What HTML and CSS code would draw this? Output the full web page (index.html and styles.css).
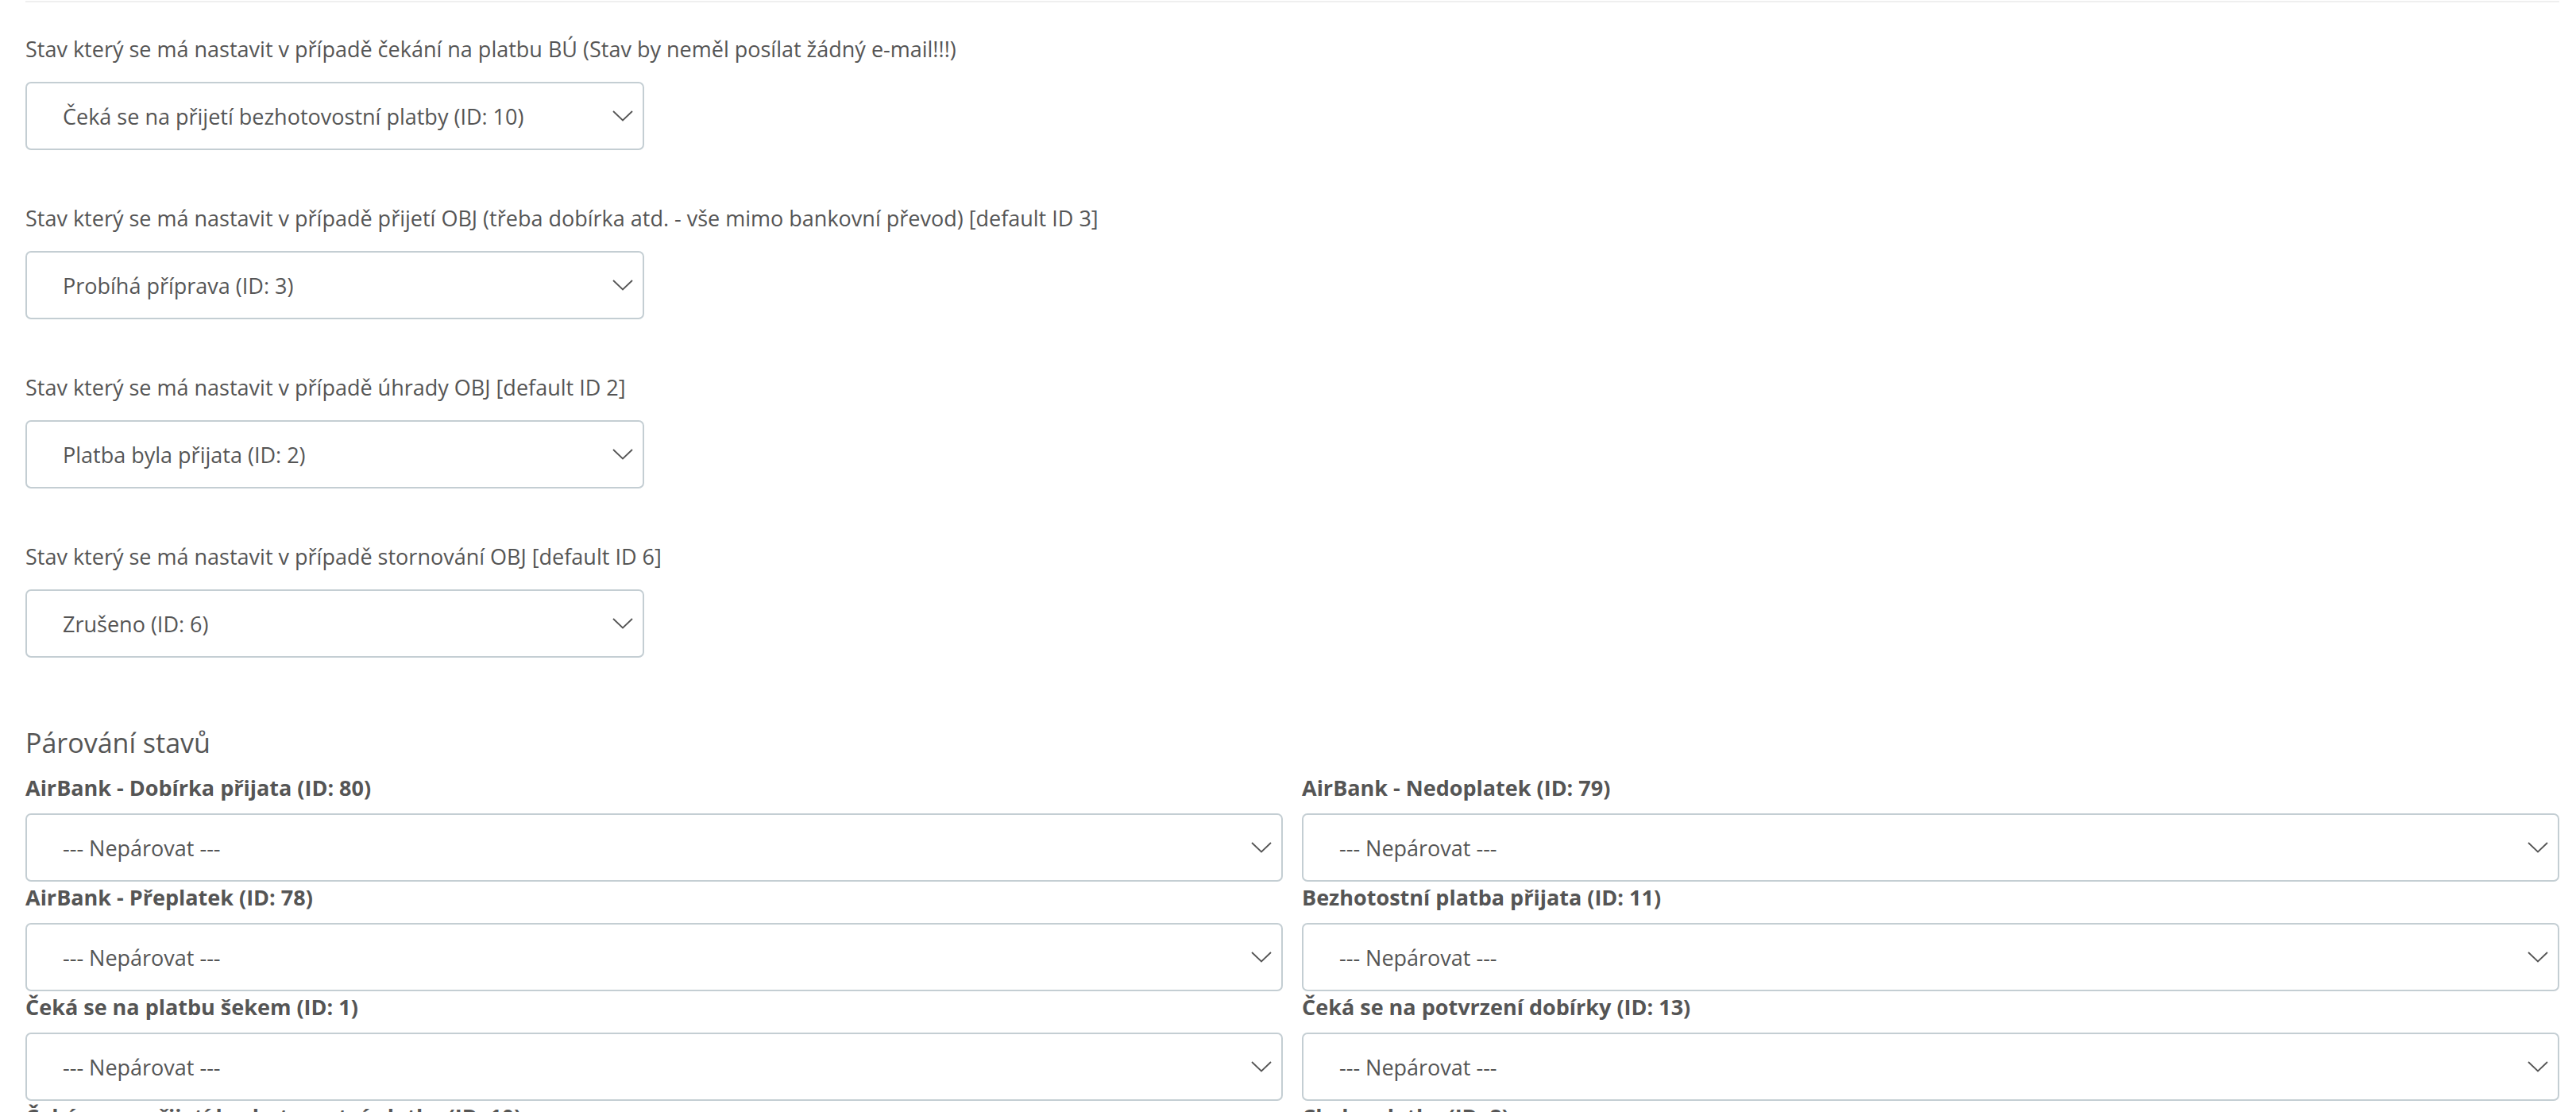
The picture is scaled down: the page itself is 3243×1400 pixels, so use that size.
FILE: index.html
```html
<!DOCTYPE html>
<html lang="cs">
<head>
    <meta charset="UTF-8">
    <meta name="viewport" content="width=device-width, initial-scale=1.0">
    <title>Nastavení stavů</title>
    <link rel="stylesheet" href="styles.css">
</head>
<body>
    <div class="container">
        <div class="top-rule"></div>

        <div class="field">
            <label for="stateWaiting">Stav který se má nastavit v případě čekání na platbu BÚ (Stav by neměl posílat žádný e-mail!!!)</label>
            <div class="select-wrap narrow">
                <select id="stateWaiting">
                    <option value="10" selected>Čeká se na přijetí bezhotovostní platby (ID: 10)</option>
                </select>
                <svg class="chevron" viewBox="0 0 26 14"><polyline points="1,1 13,12.5 25,1"/></svg>
            </div>
        </div>

        <div class="field">
            <label for="stateAccepted">Stav který se má nastavit v případě přijetí OBJ (třeba dobírka atd. - vše mimo bankovní převod) [default ID 3]</label>
            <div class="select-wrap narrow">
                <select id="stateAccepted">
                    <option value="3" selected>Probíhá příprava (ID: 3)</option>
                </select>
                <svg class="chevron" viewBox="0 0 26 14"><polyline points="1,1 13,12.5 25,1"/></svg>
            </div>
        </div>

        <div class="field">
            <label for="statePaid">Stav který se má nastavit v případě úhrady OBJ [default ID 2]</label>
            <div class="select-wrap narrow">
                <select id="statePaid">
                    <option value="2" selected>Platba byla přijata (ID: 2)</option>
                </select>
                <svg class="chevron" viewBox="0 0 26 14"><polyline points="1,1 13,12.5 25,1"/></svg>
            </div>
        </div>

        <div class="field">
            <label for="stateCanceled">Stav který se má nastavit v případě stornování OBJ [default ID 6]</label>
            <div class="select-wrap narrow">
                <select id="stateCanceled">
                    <option value="6" selected>Zrušeno (ID: 6)</option>
                </select>
                <svg class="chevron" viewBox="0 0 26 14"><polyline points="1,1 13,12.5 25,1"/></svg>
            </div>
        </div>

        <h3 class="section-title">Párování stavů</h3>
        <div class="pairing">
            <div class="pair">
                <label for="pair80">AirBank - Dobírka přijata (ID: 80)</label>
                <div class="select-wrap">
                    <select id="pair80"><option value="" selected>--- Nepárovat ---</option></select>
                    <svg class="chevron" viewBox="0 0 26 14"><polyline points="1,1 13,12.5 25,1"/></svg>
                </div>
            </div>
            <div class="pair">
                <label for="pair79">AirBank - Nedoplatek (ID: 79)</label>
                <div class="select-wrap">
                    <select id="pair79"><option value="" selected>--- Nepárovat ---</option></select>
                    <svg class="chevron" viewBox="0 0 26 14"><polyline points="1,1 13,12.5 25,1"/></svg>
                </div>
            </div>
            <div class="pair">
                <label for="pair78">AirBank - Přeplatek (ID: 78)</label>
                <div class="select-wrap">
                    <select id="pair78"><option value="" selected>--- Nepárovat ---</option></select>
                    <svg class="chevron" viewBox="0 0 26 14"><polyline points="1,1 13,12.5 25,1"/></svg>
                </div>
            </div>
            <div class="pair">
                <label for="pair11">Bezhotostní platba přijata (ID: 11)</label>
                <div class="select-wrap">
                    <select id="pair11"><option value="" selected>--- Nepárovat ---</option></select>
                    <svg class="chevron" viewBox="0 0 26 14"><polyline points="1,1 13,12.5 25,1"/></svg>
                </div>
            </div>
            <div class="pair">
                <label for="pair1">Čeká se na platbu šekem (ID: 1)</label>
                <div class="select-wrap">
                    <select id="pair1"><option value="" selected>--- Nepárovat ---</option></select>
                    <svg class="chevron" viewBox="0 0 26 14"><polyline points="1,1 13,12.5 25,1"/></svg>
                </div>
            </div>
            <div class="pair">
                <label for="pair13">Čeká se na potvrzení dobírky (ID: 13)</label>
                <div class="select-wrap">
                    <select id="pair13"><option value="" selected>--- Nepárovat ---</option></select>
                    <svg class="chevron" viewBox="0 0 26 14"><polyline points="1,1 13,12.5 25,1"/></svg>
                </div>
            </div>
            <div class="pair">
                <label for="pair10">Čeká se na přijetí bezhotovostní platby (ID: 10)</label>
                <div class="select-wrap">
                    <select id="pair10"><option value="" selected>--- Nepárovat ---</option></select>
                    <svg class="chevron" viewBox="0 0 26 14"><polyline points="1,1 13,12.5 25,1"/></svg>
                </div>
            </div>
            <div class="pair">
                <label for="pair8">Chyba platby (ID: 8)</label>
                <div class="select-wrap">
                    <select id="pair8"><option value="" selected>--- Nepárovat ---</option></select>
                    <svg class="chevron" viewBox="0 0 26 14"><polyline points="1,1 13,12.5 25,1"/></svg>
                </div>
            </div>
        </div>
    </div>
</body>
</html>
```

FILE: styles.css
```css
body {
    margin: 0;
    font-family: "Open Sans", "Noto Sans", sans-serif;
    color: #555;
    background: #fff;
}

.container {
    padding: 0 21px 0 32px;
}

.top-rule {
    height: 2px;
    margin-top: 1px;
    background: #efefef;
}

.field {
    margin-top: 39px;
    margin-bottom: 66px;
}

.field + .field {
    margin-top: 0;
}

.field label {
    display: block;
    font-size: 27px;
    line-height: 39px;
    margin-bottom: 22px;
}

.select-wrap {
    position: relative;
}

.select-wrap.narrow {
    width: 779px;
}

.select-wrap select {
    display: block;
    width: 100%;
    height: 86px;
    box-sizing: border-box;
    padding: 0 60px 0 45px;
    border: 2px solid #c4ced3;
    border-radius: 7px;
    background: #fff;
    color: #555;
    font-family: inherit;
    font-size: 27px;
    appearance: none;
    -webkit-appearance: none;
    outline: none;
}

.chevron {
    position: absolute;
    right: 14px;
    top: 50%;
    width: 26px;
    height: 14px;
    margin-top: -7px;
    pointer-events: none;
}

.chevron polyline {
    fill: none;
    stroke: #555;
    stroke-width: 1.8;
}

.section-title {
    font-size: 34px;
    font-weight: 400;
    line-height: 44px;
    margin: 85px 0 15px;
}

.pairing {
    display: grid;
    grid-template-columns: 1fr 1fr;
    column-gap: 24px;
}

.pair label {
    display: block;
    font-size: 27px;
    font-weight: 700;
    line-height: 39px;
    margin-bottom: 13px;
}
```
